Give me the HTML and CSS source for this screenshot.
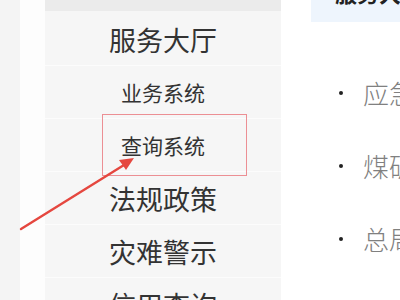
FILE: index.html
```html
<!DOCTYPE html>
<html lang="zh-CN">

<head>
    <meta charset="UTF-8">
    <meta name="viewport" content="width=device-width, initial-scale=1.0">
    <title>服务大厅</title>
    <link rel="stylesheet" href="styles.css">
</head>

<body>
    <div class="page">
        <div class="gutter"></div>
        <div class="gap"></div>
        <div class="sidebar">
            <div class="sideTop"></div>
            <ul class="menu">
                <li class="menuItem big">服务大厅</li>
                <li class="menuItem">业务系统</li>
                <li class="menuItem marked">查询系统</li>
                <li class="menuItem big">法规政策</li>
                <li class="menuItem big">灾难警示</li>
                <li class="menuItem big">信用查询</li>
            </ul>
        </div>
        <div class="main">
            <div class="mainHead"><span>服务大厅</span></div>
            <ul class="newsList">
                <li class="news">应急管理</li>
                <li class="news">煤矿安全</li>
                <li class="news">总局公告</li>
                <li class="news">地方动态</li>
            </ul>
        </div>
        <!-- 标注箭头 -->
        <svg class="arrow" width="400" height="300" viewBox="0 0 400 300">
            <line x1="21" y1="229" x2="124" y2="165" stroke="#e5473f" stroke-width="2.4" stroke-linecap="round" />
            <polygon points="134,158 119,160 126,170" fill="#e5473f" />
        </svg>
    </div>
</body>

</html>
```

FILE: styles.css
```css
* {
    margin: 0;
    padding: 0;
}

body {
    width: 400px;
    height: 300px;
    overflow: hidden;
    background-color: #fff;
    font-family: "Noto Sans CJK SC", "Noto Sans", sans-serif;
}

.page {
    position: relative;
    display: flex;
    width: 400px;
    height: 300px;
    overflow: hidden;
}

.gutter {
    flex-shrink: 0;
    width: 20px;
    background-color: #f4f4f4;
}

.gap {
    flex-shrink: 0;
    width: 25px;
    background-color: #fdfdfd;
}

.sidebar {
    flex-shrink: 0;
    width: 236px;
    background-color: #f6f6f6;
}

.sideTop {
    height: 11px;
    background-color: #ebebeb;
}

.menu {
    list-style: none;
    padding-top: 2px;
}

.menuItem {
    position: relative;
    height: 53px;
    line-height: 53px;
    text-align: center;
    font-size: 21px;
    color: #333;
    box-sizing: border-box;
    border-bottom: 1px solid #fcfcfc;
}

.menuItem.big {
    font-size: 27px;
}

.marked::after {
    content: "";
    position: absolute;
    left: 57px;
    top: -5px;
    width: 143px;
    height: 60px;
    border: 1px solid #ec8f94;
}

.main {
    flex: 1;
    min-width: 0;
    overflow: hidden;
}

.mainHead {
    margin-left: 30px;
    height: 22px;
    overflow: hidden;
    background-color: #eef5fd;
    padding-left: 24px;
}

.mainHead span {
    display: block;
    margin-top: -22px;
    line-height: 28px;
    font-size: 22px;
    font-weight: bold;
    color: #222;
    white-space: nowrap;
}

.newsList {
    list-style: none;
    margin-top: 34px;
    padding-left: 58px;
}

.news {
    display: flex;
    align-items: center;
    height: 73px;
    font-size: 26px;
    font-weight: 300;
    color: #808080;
    white-space: nowrap;
}

.news::before {
    content: "";
    flex-shrink: 0;
    width: 4px;
    height: 4px;
    margin-right: 20px;
    border-radius: 50%;
    background-color: #222;
}

.arrow {
    position: absolute;
    left: 0;
    top: 0;
}
```
